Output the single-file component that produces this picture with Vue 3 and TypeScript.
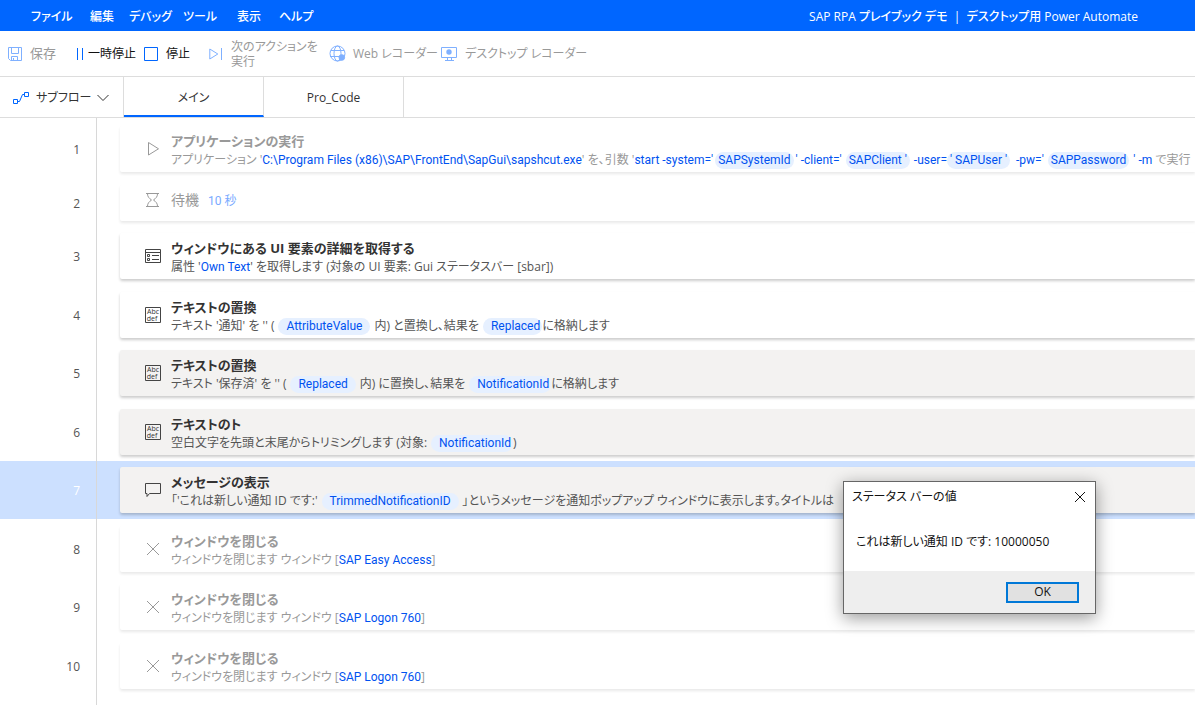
<script setup lang="ts">
type Kind = 'text' | 'link' | 'chip'
interface Segment {
  kind: Kind
  text: string
  size?: string
}
interface Action {
  id: number
  icon: 'run' | 'wait' | 'details' | 'abc' | 'message' | 'close'
  title: string
  state: 'normal' | 'muted' | 'filled' | 'selected'
  compact?: boolean
  parts: Segment[]
}

const t = (text: string): Segment => ({ kind: 'text', text })
const l = (text: string): Segment => ({ kind: 'link', text })
const c = (text: string, size = ''): Segment => ({ kind: 'chip', text, size })

const menus: string[] = ['ファイル', '編集', 'デバッグ', 'ツール', '表示', 'ヘルプ']

const closeAction = (id: number, name: string): Action => ({
  id,
  icon: 'close',
  title: 'ウィンドウを閉じる',
  state: 'muted',
  parts: [t('ウィンドウを閉じます ウィンドウ ['), l(name), t(']')],
})

const actions: Action[] = [
  {
    id: 1,
    icon: 'run',
    title: 'アプリケーションの実行',
    state: 'muted',
    parts: [
      t("アプリケーション '"),
      l('C:\\Program Files (x86)\\SAP\\FrontEnd\\SapGui\\sapshcut.exe'),
      t("' を、引数 '"),
      l("start -system='"),
      c('SAPSystemId', 'snug'),
      l("' -client='"),
      c("SAPClient '"),
      l('-user='),
      c("' SAPUser '", 'tight'),
      l("  -pw='"),
      c('SAPPassword'),
      l("' -m"),
      t(' で実行'),
    ],
  },
  { id: 2, icon: 'wait', title: '待機', state: 'muted', compact: true, parts: [l('10 秒')] },
  {
    id: 3,
    icon: 'details',
    title: 'ウィンドウにある UI 要素の詳細を取得する',
    state: 'normal',
    parts: [t("属性 '"), l('Own Text'), t("' を取得します (対象の UI 要素: Gui ステータスバー [sbar])")],
  },
  {
    id: 4,
    icon: 'abc',
    title: 'テキストの置換',
    state: 'normal',
    parts: [t("テキスト '通知' を '' ("), c('AttributeValue', 'wide'), t('内) と置換し、結果を'), c('Replaced', 'lead'), t('に格納します')],
  },
  {
    id: 5,
    icon: 'abc',
    title: 'テキストの置換',
    state: 'filled',
    parts: [t("テキスト '保存済' を '' ("), c('Replaced', 'wide'), t('内) に置換し、結果を'), c('NotificationId', 'lead'), t('に格納します')],
  },
  {
    id: 6,
    icon: 'abc',
    title: 'テキストのト',
    state: 'filled',
    parts: [t('空白文字を先頭と末尾からトリミングします (対象:'), c('NotificationId', 'lead'), t(')')],
  },
  {
    id: 7,
    icon: 'message',
    title: 'メッセージの表示',
    state: 'selected',
    parts: [t("「'これは新しい通知 ID です:'"), c('TrimmedNotificationID', 'wide'), t('」というメッセージを通知ポップアップ ウィンドウに表示します。タイトルは')],
  },
  closeAction(8, 'SAP Easy Access'),
  closeAction(9, 'SAP Logon 760'),
  closeAction(10, 'SAP Logon 760'),
]
</script>

<template>
  <div class="app">
    <header class="titlebar">
      <nav class="menus">
        <button v-for="m in menus" :key="m" type="button">{{ m }}</button>
      </nav>
      <h1>SAP RPA プレイブック デモ&nbsp; |&nbsp; デスクトップ用 Power Automate</h1>
    </header>

    <div class="toolbar">
      <button type="button" class="tool off" disabled>
        <svg width="15" height="16" viewBox="0 0 15 16" fill="none" stroke="#7fb0ff">
          <path d="M.5 1.500h13v13h-11l-2-2zM3.500 1.500v6h7v-6M3.500 14.500v-4h6v4M5.500 12v2" />
        </svg>
        <span class="large">保存</span>
      </button>
      <button type="button" class="tool narrow">
        <svg width="7" height="16" viewBox="0 0 7 16" fill="none" stroke="#06f"><path d="M.5 2v12M5.500 2v12" /></svg>
        <span>一時停止</span>
      </button>
      <button type="button" class="tool">
        <svg width="15" height="16" viewBox="0 0 15 16" fill="none" stroke="#06f"><path d="M.5 1.500h13v13h-13z" /></svg>
        <span>停止</span>
      </button>
      <button type="button" class="tool off" disabled>
        <svg width="15" height="16" viewBox="0 0 15 16" fill="none" stroke="#7fb0ff"><path d="M.8 3v10l8-5zM12.500 2v12" /></svg>
        <span>次のアクションを<br />実行</span>
      </button>
      <button type="button" class="tool off" disabled>
        <svg width="17" height="17" viewBox="0 0 17 17" fill="none" stroke="#7fb0ff">
          <circle cx="8.500" cy="8.500" r="7.500" />
          <ellipse cx="8.500" cy="8.500" rx="3.500" ry="7.500" />
          <path d="M2 5.500h13M1 11.500h10" />
          <circle cx="12.800" cy="12.500" r="2.800" fill="#7fb0ff" />
        </svg>
        <span>Web レコーダー</span>
      </button>
      <button type="button" class="tool off" disabled>
        <svg width="17" height="17" viewBox="0 0 17 17" fill="none" stroke="#7fb0ff">
          <path d="M.5 2.500h15v10h-15zM6.500 12.500v2.500M10.500 12.500v2.500M4 15.500h9" />
          <circle cx="8" cy="7" r="2.700" fill="#7fb0ff" stroke="none" />
        </svg>
        <span>デスクトップ レコーダー</span>
      </button>
    </div>

    <div class="tabs">
      <button type="button" class="subflow">
        <svg width="17" height="14" viewBox="0 0 17 14" fill="none" stroke="#06f">
          <path d="M.5 8.500h4v4h-4zM11.500 1.500h4v4h-4zM4.500 10.500h2l3-7h2" />
        </svg>
        <span>サブフロー</span>
        <svg width="12" height="8" viewBox="0 0 12 8" fill="none" stroke="#333"><path d="M.5 1l5.500 5.500L11.500 1" /></svg>
      </button>
      <button type="button" class="tab current">メイン</button>
      <button type="button" class="tab">Pro_Code</button>
    </div>

    <main>
      <ol class="flow">
        <li v-for="a in actions" :key="a.id" class="row" :class="[a.state, { compact: a.compact }]">
          <span class="number">{{ a.id }}</span>
          <article class="card">
            <svg class="icon" width="18" height="18" viewBox="0 0 18 18" fill="none" stroke="currentColor">
              <path v-if="a.icon === 'run'" d="M4.500 2.500v12.500l10-6.200z" />
              <path v-else-if="a.icon === 'wait'" d="M2 2.500h13M2 15.500h13M3.500 2.500c0 3.500 1.500 4.500 4 6.500-2.500 2-4 3-4 6.500M13.500 2.500c0 3.500-1.500 4.500-4 6.500 2.500 2 4 3 4 6.500" />
              <path v-else-if="a.icon === 'details'" d="M1.500 2.500h15v13h-15zM1.500 5.500h15M3.500 7.500h2v2h-2zM3.500 11.500h2v2h-2zM8 8.500h7M8 12.500h7" />
              <g v-else-if="a.icon === 'abc'">
                <path d="M1.500 1.500h15v15h-15z" />
                <text x="9" y="8" text-anchor="middle">Abc</text>
                <text x="8" y="15" text-anchor="middle">def</text>
              </g>
              <path v-else-if="a.icon === 'message'" d="M1.500 2.500h15v10h-11l-2.500 3v-3h-1.500z" />
              <path v-else d="M3 3l12 12M15 3L3 15" />
            </svg>
            <div class="body">
              <h2>{{ a.title }}</h2>
              <p><span v-for="(p, i) in a.parts" :key="i" :class="[p.kind, p.size]">{{ p.text }}</span></p>
            </div>
          </article>
        </li>
      </ol>
    </main>

    <section class="dialog" role="dialog" aria-labelledby="dialog-title">
      <header>
        <h2 id="dialog-title">ステータス バーの値</h2>
        <button type="button" class="dismiss" aria-label="閉じる">
          <svg width="12" height="12" viewBox="0 0 12 12" fill="none" stroke="#111"><path d="M1 1l10 10M11 1L1 11" /></svg>
        </button>
      </header>
      <p>これは新しい通知 ID です: 10000050</p>
      <footer><button type="button" class="ok">OK</button></footer>
    </section>
  </div>
</template>

<style>
body {
  margin: 0;
  background: #fff;
}
</style>

<style scoped>
.app {
  position: relative;
  display: flex;
  flex-direction: column;
  min-height: 100vh;
  max-height: 100vh;
  overflow: hidden;
  color: #333;
  font: 12px/18px "Open Sans", "Noto Sans CJK JP", sans-serif;
  font-feature-settings: "palt";
}
button {
  padding: 0;
  border: 0;
  background: none;
  color: inherit;
  font: inherit;
  font-feature-settings: inherit;
  text-align: left;
  white-space: nowrap;
}
h1,
h2,
p,
ol {
  margin: 0;
  padding: 0;
  font-weight: 400;
}
svg {
  flex: none;
}
.titlebar {
  display: flex;
  flex: none;
  align-items: center;
  justify-content: space-between;
  box-sizing: border-box;
  height: 31px;
  padding: 2px 57px 0 31px;
  background: #06f;
  color: #fff;
}
.menus {
  display: grid;
  grid-template-columns: 59px 39px 54px 54px 42px auto;
}
.menus button,
h1 {
  font-weight: 500;
}
h1 {
  font-size: 12px;
  white-space: nowrap;
}
.toolbar {
  display: grid;
  flex: none;
  grid-template-columns: 69px 67px 65px 120px 112px auto;
  align-items: center;
  height: 45px;
  padding-left: 8px;
  border-bottom: 1px solid #ddd;
}
.tool {
  display: flex;
  align-items: center;
  gap: 7px;
  color: #111;
  line-height: 15px;
}
.tool.narrow {
  gap: 4px;
}
.tool.off {
  color: #999;
}
.large {
  font-size: 13px;
}
.tabs {
  display: flex;
  flex: none;
  height: 40px;
  border-bottom: 1px solid #ddd;
}
.subflow {
  display: flex;
  align-items: center;
  gap: 6px;
  box-sizing: border-box;
  width: 124px;
  padding: 2px 0 0 13px;
  border-right: 1px solid #ddd;
}
.tab {
  width: 140px;
  padding-top: 2px;
  border-right: 1px solid #ddd;
  text-align: center;
}
.tab.current {
  padding-top: 4px;
  border-bottom: 2px solid #06f;
}
main {
  flex: 1;
  min-height: 0;
  padding-top: 1px;
  overflow: hidden;
  background: linear-gradient(90deg, #fff 96px, #d8d8d8 96px, #d8d8d8 97px, #fff 97px);
}
.flow {
  list-style: none;
}
.row {
  display: grid;
  grid-template-columns: 80px 1fr;
  column-gap: 40px;
  align-items: center;
  height: 58px;
}
.row:nth-child(even),
.row:first-child {
  height: 59px;
}
.row.compact {
  height: 49px;
}
.row.selected {
  background: linear-gradient(90deg, #cce0ff 96px, #d8d8d8 96px, #d8d8d8 97px, #cce0ff 97px);
}
.number {
  padding-top: 2px;
  color: #555;
  text-align: right;
}
.selected .number {
  color: #fff;
}
.card {
  display: flex;
  align-items: center;
  gap: 9px;
  box-sizing: border-box;
  min-width: 0;
  height: 46px;
  padding-left: 24px;
  overflow: hidden;
  border-radius: 2px 0 0 2px;
  background: #fff;
  box-shadow: 0 2px 3px rgba(0, 0, 0, 0.2);
}
.compact .card {
  height: 36px;
  padding-bottom: 5px;
}
.muted .card {
  box-shadow: 0 2px 3px rgba(0, 0, 0, 0.09);
}
.filled .card,
.selected .card {
  background: #f3f2f1;
}
.icon {
  color: #444;
}
.icon text {
  fill: #333;
  stroke: none;
  font-size: 7px;
}
.muted .icon {
  color: #999;
}
.body {
  min-width: 0;
  padding-top: 3px;
  color: #555;
  white-space: pre;
}
.body h2 {
  color: #333;
  font-size: 13px;
  font-weight: 700;
}
.body p {
  margin-top: 1px;
}
.muted .body,
.muted .body h2 {
  color: #999;
}
.compact .body {
  display: flex;
  align-items: center;
  gap: 9px;
  padding-top: 0;
}
.compact .body h2 {
  font-size: 14px;
  font-weight: 400;
}
.link,
.chip {
  color: #0052f0;
  font-family: Roboto, "Noto Sans CJK JP", sans-serif;
}
.muted.compact .link {
  color: #7aaaff;
}
.chip {
  display: inline-block;
  margin: 0 4px;
  padding: 0 3px;
  border-radius: 9px;
  background: #e6f0ff;
  line-height: 17px;
}
.chip.tight {
  margin: 0;
}
.chip.snug {
  margin: 0 2px;
}
.chip.wide {
  padding: 0 8px;
}
.chip.lead {
  margin-right: 0;
  padding: 0 2px 0 8px;
}
.dialog {
  position: absolute;
  top: 481px;
  right: 99px;
  display: flex;
  flex-direction: column;
  width: 251px;
  height: 131px;
  border: 1px solid #666;
  background: #fff;
  box-shadow: 0 4px 16px rgba(0, 0, 0, 0.4);
  color: #111;
}
.dialog header {
  display: flex;
  align-items: center;
  justify-content: space-between;
  height: 29px;
  padding: 0 9px 0 8px;
}
.dialog h2 {
  font-size: 12px;
}
.dismiss {
  display: flex;
}
.dialog p {
  flex: 1;
  padding: 22px 12px 0;
}
.dialog footer {
  display: flex;
  align-items: center;
  justify-content: flex-end;
  height: 42px;
  padding-right: 16px;
  background: #eee;
}
.ok {
  width: 73px;
  height: 21px;
  border: 2px solid #0078d7;
  background: #e1e1e1;
  line-height: 16px;
  text-align: center;
}
</style>
